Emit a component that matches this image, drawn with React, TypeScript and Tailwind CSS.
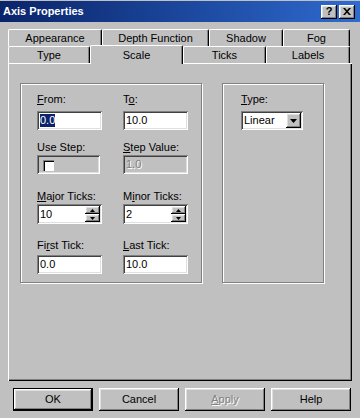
import React from "react";

const raised =
  "shadow-[inset_-1px_-1px_0_#000,inset_1px_1px_0_#fff,inset_-2px_-2px_0_#808080,inset_2px_2px_0_#dfdfdf]";
const sunken =
  "shadow-[inset_1px_1px_0_#808080,inset_-1px_-1px_0_#fff,inset_2px_2px_0_#404040,inset_-2px_-2px_0_#dfdfdf]";
const etched = "border border-[#808080] shadow-[1px_1px_0_#fff,inset_1px_1px_0_#fff]";

function Field({ children, disabled }: { children?: React.ReactNode; disabled?: boolean }) {
  return (
    <div
      className={`h-[19px] w-[65px] flex items-center pl-[3px] ${sunken} ${
        disabled ? "bg-[#c0c0c0] text-[#808080]" : "bg-white text-black"
      }`}
    >
      {children}
    </div>
  );
}

function Spin({ value }: { value: string }) {
  return (
    <div className={`h-[20px] w-[65px] flex items-center bg-white pl-[3px] pr-[2px] ${sunken}`}>
      <span className="flex-1">{value}</span>
      <div className="flex flex-col w-[15px] h-[16px]">
        <div className={`flex-1 bg-[#c0c0c0] flex items-center justify-center ${raised}`}>
          <svg width="5" height="3" viewBox="0 0 5 3">
            <path d="M2.5 0L5 3H0z" fill="#000" />
          </svg>
        </div>
        <div className={`flex-1 bg-[#c0c0c0] flex items-center justify-center ${raised}`}>
          <svg width="5" height="3" viewBox="0 0 5 3">
            <path d="M0 0h5L2.5 3z" fill="#000" />
          </svg>
        </div>
      </div>
    </div>
  );
}

function Label({ children }: { children: React.ReactNode }) {
  return <div className="h-[13px] leading-[13px]">{children}</div>;
}

function Tab({ label, w, cls = "" }: { label: string; w: string; cls?: string }) {
  return (
    <div
      className={`${w} h-[17px] flex items-center justify-center border-l border-t border-r border-white border-r-[#000] rounded-t-[2px] shadow-[inset_-1px_0_0_#808080] bg-[#c0c0c0] ${cls}`}
    >
      {label}
    </div>
  );
}

function Btn({ children, def, disabled }: { children: React.ReactNode; def?: boolean; disabled?: boolean }) {
  return (
    <div
      className={`w-[80px] h-[23px] flex items-center justify-center bg-[#c0c0c0] ${raised} ${
        def ? "border border-black" : ""
      } ${disabled ? "text-[#808080] [text-shadow:1px_1px_0_#fff]" : ""}`}
    >
      {children}
    </div>
  );
}

export default function App() {
  return (
    <div
      className="w-[360px] h-[418px] bg-[#c0c0c0] text-[11px] text-black flex flex-col overflow-hidden"
      style={{ fontFamily: '"Liberation Sans", Arial, sans-serif' }}
    >
      {/* title bar */}
      <div className="h-[21px] mt-[1px] bg-gradient-to-r from-[#0a246a] to-[#2f6bd0] flex items-center pl-[3px] pr-[5px]">
        <span className="flex-1 text-white font-bold text-[11px]">Axis Properties</span>
        <div className="flex gap-[2px]">
          <div className={`w-[16px] h-[14px] bg-[#c0c0c0] flex items-center justify-center font-bold text-[11px] ${raised}`}>
            ?
          </div>
          <div className={`w-[16px] h-[14px] bg-[#c0c0c0] flex items-center justify-center ${raised}`}>
            <svg width="8" height="7" viewBox="0 0 8 7">
              <path d="M0 0h2l2 2.2L6 0h2L5 3.5 8 7H6L4 4.8 2 7H0l3-3.5z" fill="#000" />
            </svg>
          </div>
        </div>
      </div>

      <div className="pl-[8px] pt-[7px]">
        {/* back tab row */}
        <div className="flex">
          <Tab label="Appearance" w="w-[94px]" />
          <Tab label="Depth Function" w="w-[107px]" />
          <Tab label="Shadow" w="w-[74px]" />
          <Tab label="Fog" w="w-[67px]" />
        </div>
        {/* front tab row */}
        <div className="flex items-end h-[17px]">
          <Tab label="Type" w="w-[82px]" />
          <div className="relative z-10 w-[93px] h-[19px] -mb-[1px] flex items-start pt-[1px] justify-center border-l border-t border-r border-white border-r-[#000] rounded-t-[2px] shadow-[inset_-1px_0_0_#808080] bg-[#c0c0c0]">
            Scale
          </div>
          <Tab label="Ticks" w="w-[83px]" />
          <Tab label="Labels" w="w-[84px]" />
        </div>

        {/* panel */}
        <div className="w-[344px] h-[318px] shadow-[inset_1px_1px_0_#fff,inset_-1px_-1px_0_#000,inset_-2px_-2px_0_#808080] pt-[20px] pl-[12px] flex gap-[20px]">
          <div className={`w-[182px] h-[200px] ${etched} pl-[16px] pt-[9px]`}>
            <div className="grid grid-cols-[86px_65px]">
              <Label>
                <u>F</u>rom:
              </Label>
              <Label>
                T<u>o</u>:
              </Label>
            </div>
            <div className="grid grid-cols-[86px_65px] mt-[5px]">
              <Field>
                <span className="bg-[#0a246a] text-white leading-[13px]">0.0</span>
              </Field>
              <Field>10.0</Field>
            </div>

            <div className="grid grid-cols-[86px_65px] mt-[11px]">
              <Label>Use Step:</Label>
              <Label>
                <u>S</u>tep Value:
              </Label>
            </div>
            <div className="grid grid-cols-[86px_65px] mt-[1px]">
              <div className={`h-[19px] w-[63px] bg-[#c0c0c0] flex items-center pl-[6px] ${sunken}`}>
                <div className="w-[11px] h-[11px] bg-white mt-[2px] shadow-[inset_1px_1px_0_#808080,inset_2px_2px_0_#000]" />
              </div>
              <Field disabled>
                <span className="[text-shadow:1px_1px_0_#fff]">1.0</span>
              </Field>
            </div>

            <div className="grid grid-cols-[86px_65px] mt-[16px]">
              <Label>
                <u>M</u>ajor Ticks:
              </Label>
              <Label>
                M<u>i</u>nor Ticks:
              </Label>
            </div>
            <div className="grid grid-cols-[86px_65px] mt-[1px]">
              <Spin value="10" />
              <Spin value="2" />
            </div>

            <div className="grid grid-cols-[86px_65px] mt-[15px]">
              <Label>
                Fi<u>r</u>st Tick:
              </Label>
              <Label>
                <u>L</u>ast Tick:
              </Label>
            </div>
            <div className="grid grid-cols-[86px_65px] mt-[3px]">
              <Field>0.0</Field>
              <Field>10.0</Field>
            </div>
          </div>

          <div className={`w-[102px] h-[200px] ${etched} pl-[18px] pt-[9px]`}>
            <Label>
              <u>T</u>ype:
            </Label>
            <div className={`mt-[5px] w-[62px] h-[19px] bg-white flex items-center pl-[3px] pr-[2px] ${sunken}`}>
              <span className="flex-1">Linear</span>
              <div className={`w-[15px] h-[15px] bg-[#c0c0c0] flex items-center justify-center ${raised}`}>
                <svg width="7" height="4" viewBox="0 0 7 4">
                  <path d="M0 0h7L3.5 4z" fill="#000" />
                </svg>
              </div>
            </div>
          </div>
        </div>
      </div>

      {/* buttons */}
      <div className="flex gap-[6px] pl-[13px] mt-[7px]">
        <Btn def>OK</Btn>
        <Btn>Cancel</Btn>
        <Btn disabled>
          <span>
            <u>A</u>pply
          </span>
        </Btn>
        <Btn>Help</Btn>
      </div>
    </div>
  );
}
